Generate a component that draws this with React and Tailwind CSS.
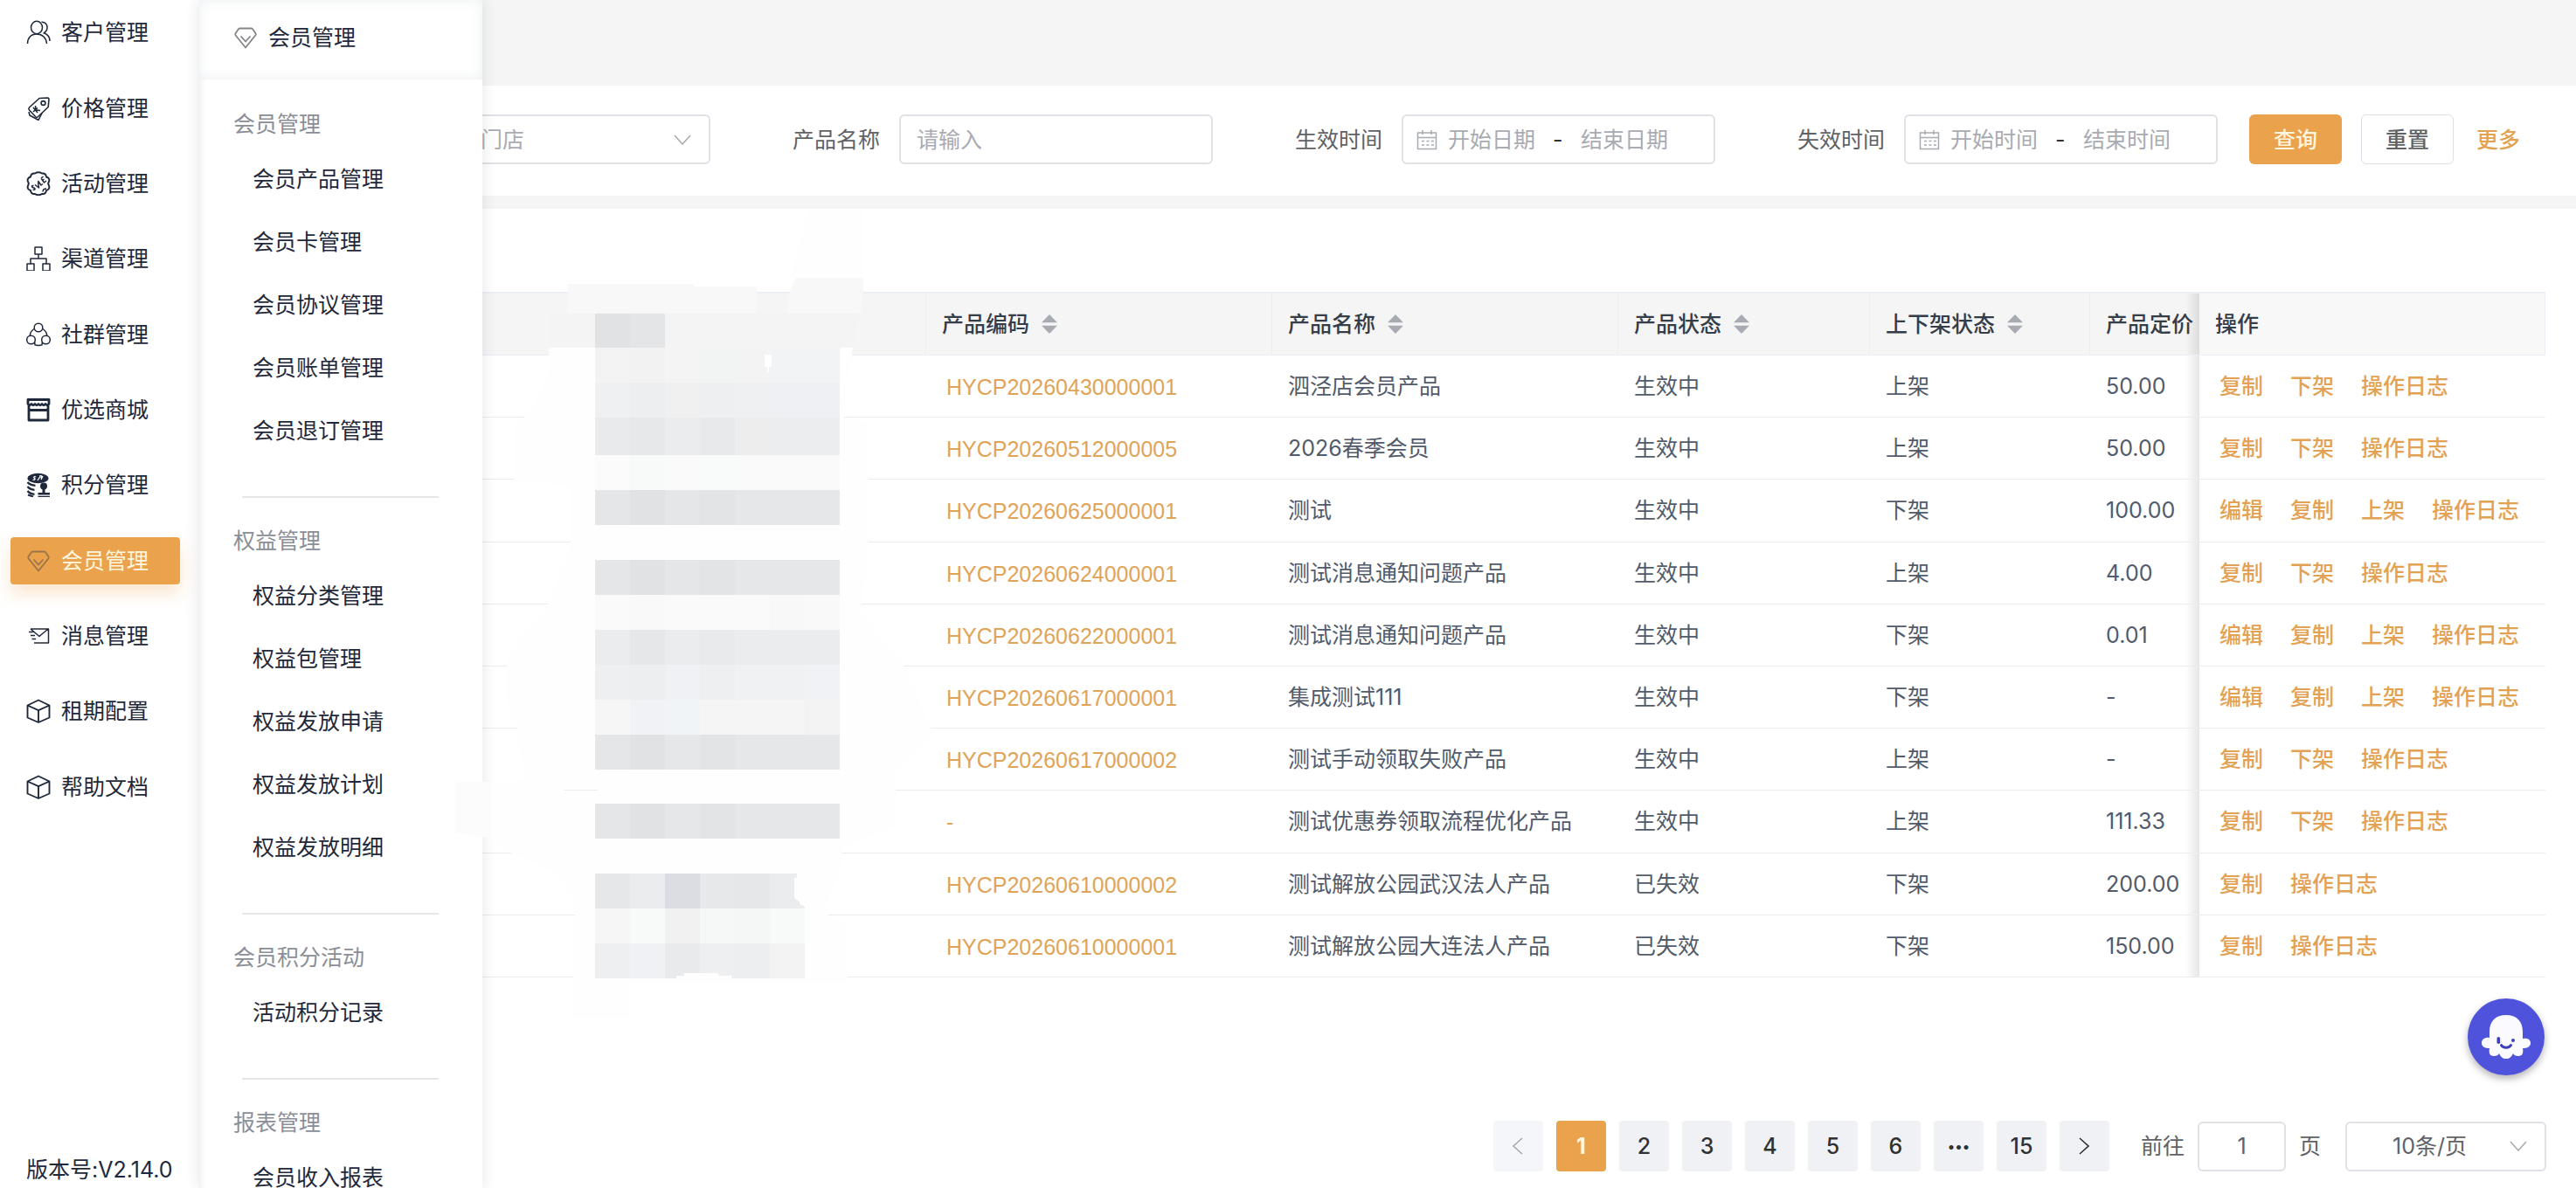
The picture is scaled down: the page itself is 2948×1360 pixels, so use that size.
import React from "react";

const GemIcon = ({ className }) => (
  <svg viewBox="0 0 28 28" className={className} fill="none" stroke="currentColor" strokeWidth="1.8" strokeLinejoin="round" strokeLinecap="round">
    <path d="M7.500 3.500h13q1 0 1.600.8l3.400 5q.7 1 0 2L14 25.500 2.500 11.300q-.7-1 0-2l3.400-5q.6-.8 1.600-.8Z" />
    <path d="m9 13 5 5.500L19 13" />
  </svg>
);

const icons = {
  user: (
    <g strokeWidth="1.500">
      <ellipse cx="12" cy="8.500" rx="6.500" ry="7.200" />
      <path d="M1.500 27c0-6.500 4-11 10.500-11s11 4.500 11.500 11M17.500 2.200c4.500-.2 6.500 3 6.500 6.300 0 3-1.500 5-4 6.300 4.500 1.500 7 5 7 9.200" />
    </g>
  ),
  price: (
    <g strokeWidth="1.600">
      <path d="M3.500 13 15 2.500 24.500 2q1.500 0 1.500 1.500l-.8 9L13 24q-1 1-2 0l-7.500-8q-1.200-1.500 0-3Z" />
      <circle cx="19.500" cy="8" r="2.400" />
      <path d="m8 13 5 6m-2.500-8 .5 5 5 .5M8 18l5-4.500M3 18l1 4 10 5.500 4-8" />
    </g>
  ),
  sale: (
    <g>
      <path strokeWidth="2" d="M10 2.500q4-2.500 8 0 4.500-.5 5 4 4.500 1.500 3 5.500-1.500 2 0 4.500 1.500 4-3 5.500-.5 4.500-5 4-4 2.500-8 0-4.500.5-5-4-4.500-1.500-3-5.500 1.500-2.500 0-4.500-1.500-4 3-5.500.5-4.500 5-4Z" />
      <path strokeWidth="1.500" d="M8.500 16.500c-3-.5-2.500 2 0 2.500s2 3-.8 2M10 15.500l4.500 3.500-1-6.500M13.500 11l3.500 5 2-1.500M17 8l3.500 5 2.500-2M17 8l2.500-1.800M18.500 10.500l2-1.500M19 23.500c0-2 1.500-3.500 4-3.500" />
    </g>
  ),
  channel: (
    <g strokeWidth="1.500">
      <path d="M10 1h8v8h-8zM1 20h8v8H1zM19 20h8v8h-8zM14 9v5M5 20v-6h18v6" />
    </g>
  ),
  group: (
    <g strokeWidth="1.500">
      <circle cx="14" cy="6" r="4.800" />
      <circle cx="5.500" cy="20" r="4.800" />
      <circle cx="22.500" cy="20" r="4.800" />
      <path d="M9 7.500c-3 2-4.500 4.500-4.800 7.500M19 7.500c3 2 4.500 4.500 4.800 7.500M9.500 25.500c3 1.300 6 1.300 9 0M9.800 22.500v3M18.200 22.500v3" />
    </g>
  ),
  shop: (
    <g strokeWidth="2.800">
      <path d="M2 2.500h24v5q-2 2.500-4 0-2 2.500-4 0-2 2.500-4 0-2 2.500-4 0-2 2.500-4 0-2 2.500-4 0ZM3 9v17h22V9M3 14.500h22" />
    </g>
  ),
  points: (
    <g>
      <ellipse cx="13.500" cy="6.500" rx="12" ry="5.800" fill="currentColor" stroke="none" />
      <path stroke="#fff" strokeWidth="1.300" d="M11 5c-2-1-3 .5-1.500 1.500S9 9 7.500 8M13 9l3-4.500M15 4c3-1 4 .5 1.500 2M19 4l-2 4" />
      <path strokeWidth="2.200" d="M1.500 11c2 2.500 5 3.500 9 3.800M1.500 16c2 2.500 4.500 3.500 8 3.800M1.500 21c2 2.500 4.500 3.500 8 3.800M2 25.500l6 2" />
      <circle cx="20" cy="15.500" r="4" fill="currentColor" stroke="none" />
      <path fill="currentColor" stroke="none" d="M18.500 18h3v5H27v2.500H13.500V23h5zM13.500 26.800H27V28H13.500z" />
    </g>
  ),
  message: (
    <g strokeWidth="1.500">
      <path d="M5 6h20.500v16H9M5 6l10 8.500L25 6M3 9.500h4.500M5 13.500h5M6.500 17.500H11" />
    </g>
  ),
  cube: (
    <g strokeWidth="1.900">
      <path d="m14 1.500 12.500 6v14L14 27 1.500 21.500v-14ZM1.500 7.500 14 13.200l12.500-5.700M14 13.200V27" />
    </g>
  ),
};

const menu = [
  ["客户管理", "user"],
  ["价格管理", "price"],
  ["活动管理", "sale"],
  ["渠道管理", "channel"],
  ["社群管理", "group"],
  ["优选商城", "shop"],
  ["积分管理", "points"],
  ["会员管理", "gem"],
  ["消息管理", "message"],
  ["租期配置", "cube"],
  ["帮助文档", "cube"],
];

const groups = [
  { title: "会员管理", items: ["会员产品管理", "会员卡管理", "会员协议管理", "会员账单管理", "会员退订管理"] },
  { title: "权益管理", items: ["权益分类管理", "权益包管理", "权益发放申请", "权益发放计划", "权益发放明细"] },
  { title: "会员积分活动", items: ["活动积分记录"] },
  { title: "报表管理", items: ["会员收入报表"] },
];

const LOG = "操作日志";
const rows = [
  ["HYCP20260430000001", "泗泾店会员产品", "生效中", "上架", "50.00", ["复制", "下架", LOG]],
  ["HYCP20260512000005", "2026春季会员", "生效中", "上架", "50.00", ["复制", "下架", LOG]],
  ["HYCP20260625000001", "测试", "生效中", "下架", "100.00", ["编辑", "复制", "上架", LOG]],
  ["HYCP20260624000001", "测试消息通知问题产品", "生效中", "上架", "4.00", ["复制", "下架", LOG]],
  ["HYCP20260622000001", "测试消息通知问题产品", "生效中", "下架", "0.01", ["编辑", "复制", "上架", LOG]],
  ["HYCP20260617000001", "集成测试111", "生效中", "下架", "-", ["编辑", "复制", "上架", LOG]],
  ["HYCP20260617000002", "测试手动领取失败产品", "生效中", "上架", "-", ["复制", "下架", LOG]],
  ["-", "测试优惠券领取流程优化产品", "生效中", "上架", "111.33", ["复制", "下架", LOG]],
  ["HYCP20260610000002", "测试解放公园武汉法人产品", "已失效", "下架", "200.00", ["复制", LOG]],
  ["HYCP20260610000001", "测试解放公园大连法人产品", "已失效", "下架", "150.00", ["复制", LOG]],
];

// masked column: [y, height, fill of each 40px cell]
const mosaic = [
  [359, 39, ["#e1e2e4", "#e4e5e7"]],
  [398, 40, ["#f3f3f3", "#f2f2f2", "#f4f4f4", "#f2f3f3", "#f3f3f3", "#f2f3f5", "#f2f3f5"]],
  [438, 40, ["#eff0f2", "#edeef0", "#f1f0f0", "#edeff0", "#eff0f2", "#eff0f3", "#eff0f3"]],
  [478, 43, ["#e9eaeb", "#e7e8e9", "#ebeced", "#e8e9ea", "#ededed", "#ecedee", "#ecedee"]],
  [521, 40, ["#fafbfa", "#f8f9f9", "#fafafa", "#f9fbfa", "#fafafa", "#f9faf9", "#f9faf9"]],
  [561, 40, ["#e5e6e7", "#e1e2e4", "#e5e6e8", "#e3e4e6", "#e6e7e8", "#e6e7e8", "#e6e7e8"]],
  [641, 40, ["#e5e6e7", "#e1e2e4", "#e5e6e8", "#e3e4e6", "#e6e7e8", "#e6e7e8", "#e6e7e8"]],
  [681, 40, ["#fafafa", "#f9f9f9", "#fafafa", "#fafafa", "#fafafa", "#f8f8f8", "#f9f9f9"]],
  [721, 40, ["#ebecee", "#e6e7e8", "#ebecee", "#e9eaec", "#ebecee", "#ebecee", "#ebecee"]],
  [761, 40, ["#eeeff1", "#edeef0", "#f0f1f4", "#eeeff1", "#f0f1f3", "#f0f1f3", "#f1f2f5"]],
  [801, 40, ["#f6f6f6", "#f0f2f5", "#f1f4f7", "#f5f5f5", "#f5f5f5", "#f5f5f5", "#f3f3f3"]],
  [841, 40, ["#e5e6e7", "#e1e2e4", "#e6e7e9", "#e3e4e6", "#e6e7e8", "#e6e7e8", "#e6e7e8"]],
  [920, 40, ["#e5e6e7", "#e1e2e4", "#e6e7e9", "#e3e4e6", "#e6e7e8", "#e6e7e8", "#e6e7e8"]],
  [1000, 40, ["#e6e7e9", "#ebecee", "#dcdde2", "#e7e8ea", "#e6e7e9"]],
  [1040, 40, ["#f6f6f6", "#f8faf9", "#f1f1f2", "#f6f8f7", "#f5f7f6", "#f8faf9"]],
  [1080, 40, ["#eeeff1", "#eff1f4", "#e9eaec", "#eeeff1", "#edeef0", "#f3f3f3"]],
];

function SideIcon({ name }) {
  if (name === "gem") return <GemIcon className="h-7 w-7 shrink-0 text-[#9a7448]" />;
  return (
    <svg viewBox="0 0 28 28" className="h-7 w-7 shrink-0" fill="none" stroke="currentColor" strokeLinejoin="round">
      {icons[name]}
    </svg>
  );
}

function Chevron({ className }) {
  return (
    <svg viewBox="0 0 20 12" className={className} fill="none" stroke="currentColor" strokeWidth="1.600">
      <path d="m1 1 9 10 9-10" />
    </svg>
  );
}

function CalendarIcon() {
  return (
    <svg viewBox="0 0 23 24" className="h-6 w-6 shrink-0 text-[#a8abb2]" fill="none" stroke="currentColor" strokeWidth="1.500">
      <path d="M1 4h21v18.500H1zM1 9.500h21M6.500 1v5M16.500 1v5" />
      <path strokeDasharray="3 2.500" d="M5.500 13.500h14M5.500 18h14" />
    </svg>
  );
}

function Sidebar() {
  return (
    <aside className="flex w-[228px] shrink-0 flex-col justify-between bg-white pb-[3px] text-[#1f293b]">
      <nav className="-mt-1.5 grid h-[950px] auto-rows-fr pr-[22px] pl-3">
        {menu.map(([label, icon]) => (
          <div key={label} className="flex items-center">
            <a
              href="#"
              className={
                icon === "gem"
                  ? "flex h-[54px] w-full items-center gap-3 rounded bg-[#eba24c] pl-[18px] text-[#fff6df] shadow-[0_10px_20px_0_rgba(235,162,76,0.28)]"
                  : "flex h-[54px] w-full items-center gap-3 pl-[18px]"
              }
            >
              <SideIcon name={icon} />
              {label}
            </a>
          </div>
        ))}
      </nav>
      <p className="pl-[30px]">版本号:V2.14.0</p>
    </aside>
  );
}

function SubMenu() {
  return (
    <section className="absolute inset-y-0 left-[228px] z-10 w-[324px] overflow-hidden bg-white text-[#1f293b] shadow-[0_0_16px_0_rgba(31,41,59,0.12)]">
      <h2 className="flex h-[91px] items-center gap-3 pb-1.5 pl-[39px] shadow-[inset_0_0_14px_0_rgba(100,120,140,0.13)]">
        <GemIcon className="h-7 w-7 text-[#85868a]" />
        会员管理
      </h2>
      <div className="pt-6 shadow-[inset_8px_0_10px_-8px_rgba(31,41,59,0.12)]">
        {groups.map((g, i) => (
          <div key={g.title}>
            {i > 0 && <hr className="mt-[39px] mb-[22px] ml-[49px] w-[225px] border-t-2 border-[#e6e6e7]" />}
            <h3 className="pl-[39px] leading-[54px] text-[#8a8e97]">{g.title}</h3>
            <ul>
              {g.items.map((t) => (
                <li key={t} className="pl-[61px] leading-[72px]">
                  <a href="#">{t}</a>
                </li>
              ))}
            </ul>
          </div>
        ))}
      </div>
    </section>
  );
}

const box = "flex h-[57px] min-w-0 flex-1 items-center rounded-md border-2 border-[#dfe1e6] bg-white";

function Field({ id, label, children }) {
  return (
    <div className="flex min-w-0 items-center gap-[22px]">
      <label htmlFor={id} className="w-[100px] shrink-0 text-[#606266]">{label}</label>
      {children}
    </div>
  );
}

function DateRange({ id, from, to }) {
  return (
    <div className={`${box} pl-[15px]`}>
      <CalendarIcon />
      <input id={id} placeholder={from} className="ml-3 w-[110px] outline-none placeholder:text-[#a8abb2]" />
      <span className="w-[42px] pl-2.5 text-[#303133]">-</span>
      <input aria-label={to} placeholder={to} className="min-w-0 flex-1 outline-none placeholder:text-[#a8abb2]" />
    </div>
  );
}

function Filters() {
  return (
    <form className="flex items-center bg-white pt-[33px] pr-16 pb-9 pl-[104px]">
      <div className="grid min-w-0 flex-1 grid-cols-4 gap-[94px]">
        <div className="flex min-w-0 pl-[122px]">
          <div className={`${box} relative`}>
            <select aria-label="门店" className="h-full w-full appearance-none pl-[19px] text-[#a8abb2] outline-none">
              <option>请选择门店</option>
            </select>
            <Chevron className="pointer-events-none absolute right-5 h-3 w-5 text-[#a8abb2]" />
          </div>
        </div>
        <Field id="name" label="产品名称">
          <input id="name" placeholder="请输入" className={`${box} px-[18px] outline-none placeholder:text-[#a8abb2]`} />
        </Field>
        <Field id="start" label="生效时间">
          <DateRange id="start" from="开始日期" to="结束日期" />
        </Field>
        <Field id="end" label="失效时间">
          <DateRange id="end" from="开始时间" to="结束时间" />
        </Field>
      </div>
      <button type="button" className="ml-9 h-[57px] w-[106px] rounded-md bg-[#eba24c] font-medium text-[#fff6df]">查询</button>
      <button type="button" className="ml-[22px] h-[57px] w-[106px] rounded-md border border-[#dcdfe6] font-medium text-[#606266]">重置</button>
      <button type="button" className="ml-[26px] font-medium text-[#e3a24f]">更多</button>
    </form>
  );
}

function HeadCell({ label, sortable = true }) {
  return (
    <th className="overflow-hidden border-r border-[#ebeef5] pl-[18px] text-left font-medium whitespace-nowrap">
      <span className="flex items-center gap-3.5">
        {label}
        {sortable && (
          <svg viewBox="0 0 18 22" className="h-[22px] w-[18px] shrink-0 fill-[#a8abb2]">
            <path d="M9 0l9 9.200H0zM9 22l9-9.200H0z" />
          </svg>
        )}
      </span>
    </th>
  );
}

const PinShadow = () => <span className="absolute inset-y-0 right-0 w-4 bg-linear-to-r from-transparent to-black/10" />;

function Mosaic() {
  return (
    <svg width="560" height="940" viewBox="521 240 560 940" className="absolute -top-[94px] left-[257px] z-20" shapeRendering="crispEdges">
      <path fill="#fefefe" d="M926 240h62v78h-84zM628 398V428L607 470 588 490V552L653 556V625L628 690 580 750 579 800 592 833 600 893 563 895V960L582 975 640 1000 660 1040 656 1060V1165H720V1125H970V1060L942 1044 964 990V970L1025 945V880L1068 840 1034 762 985 700 994 620V485L964 477 976 398Z" />
      <path fill="#fcfcfc" d="M521 895h42v65l-42-7z" />
      <path fill="#ededee" d="M645 904h39v1h-39z" />
      <path fill="#f8f8f8" d="M650 325h145v3h71v30H650zM911 318h77v15l-3 25h-84l3-25z" />
      <path fill="#f4f4f4" d="M628 359h354l-4 39H628z" />
      {mosaic.map(([y, h, fills]) =>
        fills.map((fill, i) => <rect key={`${y}-${i}`} x={681 + i * 40} y={y} width="40" height={h} fill={fill} />)
      )}
      <path fill="#ebecee" d="M881 1000h31v5h-3v23l6 4v3l6 3v2h-40z" />
      <path fill="#fff" d="M875 406h8v14h-3v6h-2v-6h-3zM783 1114h39v3h15v3h-63v-3h9z" />
    </svg>
  );
}

function ProductTable() {
  return (
    <div className="relative">
      <table className="h-[785px] w-full table-fixed border-separate border-spacing-0 border-t-2 border-[#ebeef5] text-[#515b6b]">
        <colgroup>
          <col />
          <col className="w-[396px]" />
          <col className="w-[396px]" />
          <col className="w-[288px]" />
          <col className="w-[252px]" />
          <col className="w-[125px]" />
          <col className="w-[396px]" />
        </colgroup>
        <thead>
          <tr className="h-[71px] bg-[#f5f5f6] text-[#353d49] *:border-b">
            <HeadCell label="" sortable={false} />
            <HeadCell label="产品编码" />
            <HeadCell label="产品名称" />
            <HeadCell label="产品状态" />
            <HeadCell label="上下架状态" />
            <th className="relative border-[#ebeef5] pl-[18px] text-left font-medium whitespace-nowrap">
              产品定价
              <PinShadow />
            </th>
            <th className="border-r border-[#ebeef5] bg-[#f8f8f8] pl-[18px] text-left font-medium">操作</th>
          </tr>
        </thead>
        <tbody>
          {rows.map(([code, name, status, shelf, price, ops], i) => (
            <tr key={i} className="*:border-b *:border-[#ebecee] *:whitespace-nowrap">
              <td />
              <td className="pt-0.5 pl-[23px]">
                <a href="#" className="font-['Liberation_Sans','Noto_Sans_CJK_SC',sans-serif] text-[#e0a458]">{code}</a>
              </td>
              <td className="pl-[18px]">{name}</td>
              <td className="pl-[18px]">{status}</td>
              <td className="pl-[18px]">{shelf}</td>
              <td className="relative pl-[18px]">
                {price}
                <PinShadow />
              </td>
              <td className="pl-[23px]">
                <span className="flex gap-[31px] font-medium text-[#e3a253]">
                  {ops.map((op) => (
                    <button key={op} type="button">{op}</button>
                  ))}
                </span>
              </td>
            </tr>
          ))}
        </tbody>
      </table>
      <Mosaic />
    </div>
  );
}

const pageBtn = "flex h-[58px] w-[57px] items-center justify-center rounded";

function Pagination() {
  return (
    <div className="mt-auto flex items-center justify-end pr-[34px] pb-[19px] text-[#606266]">
      <div className="flex gap-[15px] font-medium text-[#303133]">
        <button type="button" aria-label="上一页" disabled className={`${pageBtn} bg-[#f5f6fa] text-[#a8abb2]`}>
          <Chevron className="h-3 w-5 rotate-90" />
        </button>
        {["1", "2", "3", "4", "5", "6", "•••", "15"].map((n) => (
          <button
            key={n}
            type="button"
            className={`${pageBtn} ${n === "1" ? "bg-[#eba24c] font-bold text-[#fff6df]" : "bg-[#f0f1f5]"} ${n === "•••" ? "text-base" : ""}`}
          >
            {n}
          </button>
        ))}
        <button type="button" aria-label="下一页" className={`${pageBtn} bg-[#f0f1f5]`}>
          <Chevron className="h-3 w-5 -rotate-90" />
        </button>
      </div>
      <label className="ml-9 flex items-center gap-[15px]">
        前往
        <input defaultValue="1" className="h-[57px] w-[101px] rounded-md border-2 border-[#dfe1e6] text-center outline-none" />
        页
      </label>
      <div className="relative ml-7 flex items-center">
        <select aria-label="每页条数" className="h-[57px] w-[230px] appearance-none rounded-md border-2 border-[#dfe1e6] pl-[52px] outline-none">
          <option>10条/页</option>
        </select>
        <Chevron className="pointer-events-none absolute right-[22px] h-3 w-5 text-[#a8abb2]" />
      </div>
    </div>
  );
}

function HelpBot() {
  return (
    <button type="button" aria-label="在线客服" className="absolute right-9 bottom-[129px] h-[88px] w-[88px] rounded-full bg-[#4f53dc] shadow-[0_4px_8px_0_rgba(0,0,0,0.3)]">
      <svg viewBox="0 0 88 88" className="h-full w-full">
        <path fill="#fafaff" d="M25 45V38c0-12 7-19 19-19s19 7 19 19v8c4-1 9 0 9 5s-5 6-9 6c1 5 0 9-5 9-3 0-5-1-6-3-2 4-4 6-8 6s-6-2-8-6c-1 2-3 3-6 3-5 0-6-4-5-9-4 0-9-1-9-6s5-7 9-6Z" />
        <rect x="33.500" y="44" width="3.600" height="8" rx="1.800" fill="#3d40b8" />
        <circle cx="52" cy="48" r="2" fill="#3d40b8" />
        <path d="M38.500 53.500c2 3.500 9 3.500 11 0" fill="none" stroke="#3d40b8" strokeWidth="3" strokeLinecap="round" />
      </svg>
    </button>
  );
}

export default function App() {
  return (
    <div className="relative flex h-screen overflow-hidden bg-[#f5f5f5] font-['Inter','Noto_Sans_CJK_SC',sans-serif] text-[25px] leading-9">
      <Sidebar />
      <SubMenu />
      <main className="flex min-w-0 flex-1 flex-col">
        <div className="h-[98px] shrink-0" />
        <Filters />
        <div className="mt-[15px] flex flex-1 flex-col bg-white">
          <div className="pt-[95px] pr-[35px] pl-9">
            <ProductTable />
          </div>
          <Pagination />
        </div>
      </main>
      <HelpBot />
    </div>
  );
}
